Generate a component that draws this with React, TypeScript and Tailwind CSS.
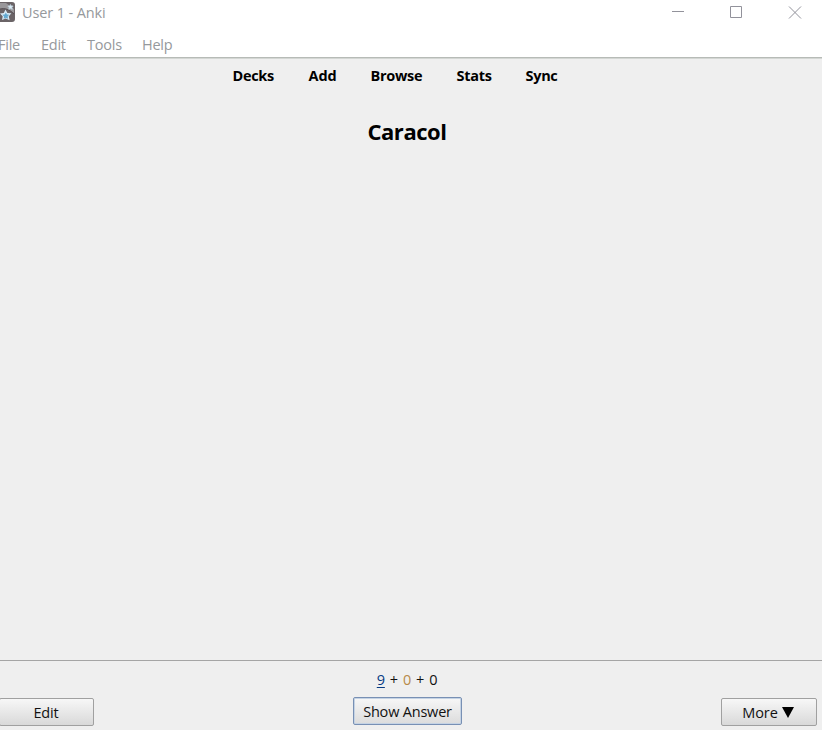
const menus = [
  { label: "File", style: "w-[43px]" },
  { label: "Edit", style: "w-[46px]" },
  { label: "Tools", style: "w-[55px]" },
  { label: "Help", style: "w-[40px]" },
];

const links = [
  { label: "Decks", style: "w-[76px]" },
  { label: "Add", style: "w-[62px] tracking-[-0.1px]" },
  { label: "Browse", style: "w-[86px]" },
  { label: "Stats", style: "w-[69px]" },
  { label: "Sync", style: "w-[40px]" },
];

function AppIcon() {
  return (
    <svg width="15" height="20" viewBox="0 0 15 20" className="block shrink-0">
      <path d="M0 0H12Q15 0 15 3V17Q15 20 12 20H0Z" fill="#6b6467" />
      <path d="M0 1H6L14 7V11Q6 5 0 7Z" fill="#99979a" />
      <path d="M0 7Q7 5 14 12" stroke="#575055" strokeWidth="1" fill="none" />
      <path d="m5.5 7.5 1.9 3.500 4 .3-2.600 3 .8 4-3.900-1.800L2 18l.7-3.800L0 11.500l3.800-.6Z" fill="#d9eaf5" />
      <path d="m5.800 10.500 1.100 2 2.300.2-1.600 1.800.4 2.300-2.300-1.100-2 1 .4-2.300-1.700-1.600 2.300-.4Z" fill="#64a9d1" />
      <path d="m10.400 2.500.8 1.400 1.900.1-1.200 1.500.4 1.800-1.800-.8-1.700.7.3-1.700-1.200-1.400 1.800-.2Z" fill="#dcebf4" stroke="#bed0dd" strokeWidth=".8" />
    </svg>
  );
}

export default function App() {
  return (
    <div className="flex h-[730px] w-[822px] flex-col overflow-hidden bg-[#efefef] font-['Open_Sans','Noto_Sans',sans-serif] text-[14.500px] leading-5 text-[#111]">
      <header className="h-[59px] shrink-0 border-b border-[#d4d7d4] bg-white text-[#96999c]">
        <div className="h-[58px] border-b border-[#b7bbb7]">
          <div className="flex h-[30px] items-start justify-between">
            <div className="flex pt-[2px]">
              <AppIcon />
              <span className="ml-[7px] whitespace-nowrap pt-px tracking-[-0.12px]">User 1 - Anki</span>
            </div>
            <svg width="150" height="28" viewBox="0 0 150 28" fill="none" stroke="#92929b" className="block">
              <path d="M0 11.500h12M58.500 6.500h11v11h-11ZM117 6.500l12 12M129 6.500l-12 12" />
            </svg>
          </div>
          <nav className="-ml-[2px] flex pt-[5px] tracking-[-0.24px]">
            {menus.map((m) => (
              <span key={m.label} className={m.style}>{m.label}</span>
            ))}
          </nav>
        </div>
      </header>
      <nav className="ml-[232.500px] flex pt-[7px] font-bold tracking-[-0.300px] text-black">
        {links.map((l) => (
          <span key={l.label} className={l.style}>{l.label}</span>
        ))}
      </nav>
      <main className="grow pt-[31px]">
        <h1 className="w-[814px] text-center text-[22px] font-bold leading-[28px] tracking-[-0.45px] text-black">Caracol</h1>
      </main>
      <footer className="h-[70px] shrink-0 border-t border-[#a5a5a5] pt-[9px]">
        <div className="flex h-5 w-[814px] justify-center gap-[5px] tracking-[-0.2px]">
          <span className="text-[#063b83] underline underline-offset-2">9</span>
          <span>+</span>
          <span className="text-[#b78a48]">0</span>
          <span>+</span>
          <span>0</span>
        </div>
        <div className="grid grid-cols-[353px_368px_96px] items-start pt-[7px]">
          <button className="-ml-px mt-px h-[28px] w-[95px] rounded-[2px] border border-[#a0a0a0] bg-linear-to-b from-[#f7f7f7] to-[#d9d9d9] pr-px pt-px tracking-[-0.2px]">Edit</button>
          <button className="h-[28px] w-[109px] rounded-[2px] border border-[#7890b4] bg-linear-to-b from-[#f7f7f7] to-[#dcdcdc] pt-px tracking-[-0.2px] shadow-[inset_0_0_0_1px_#c5d3e4]">Show Answer</button>
          <button className="mt-px flex h-[28px] w-[96px] items-center justify-center gap-1 rounded-[2px] border border-[#a0a0a0] bg-linear-to-b from-[#f7f7f7] to-[#d9d9d9] pr-[2px] tracking-[-0.1px]">
            <span className="pt-px">More</span>
            <svg width="12" height="11" viewBox="0 0 12 11"><path d="M0 0H12L6 11Z" fill="#000" /></svg>
          </button>
        </div>
      </footer>
    </div>
  );
}
